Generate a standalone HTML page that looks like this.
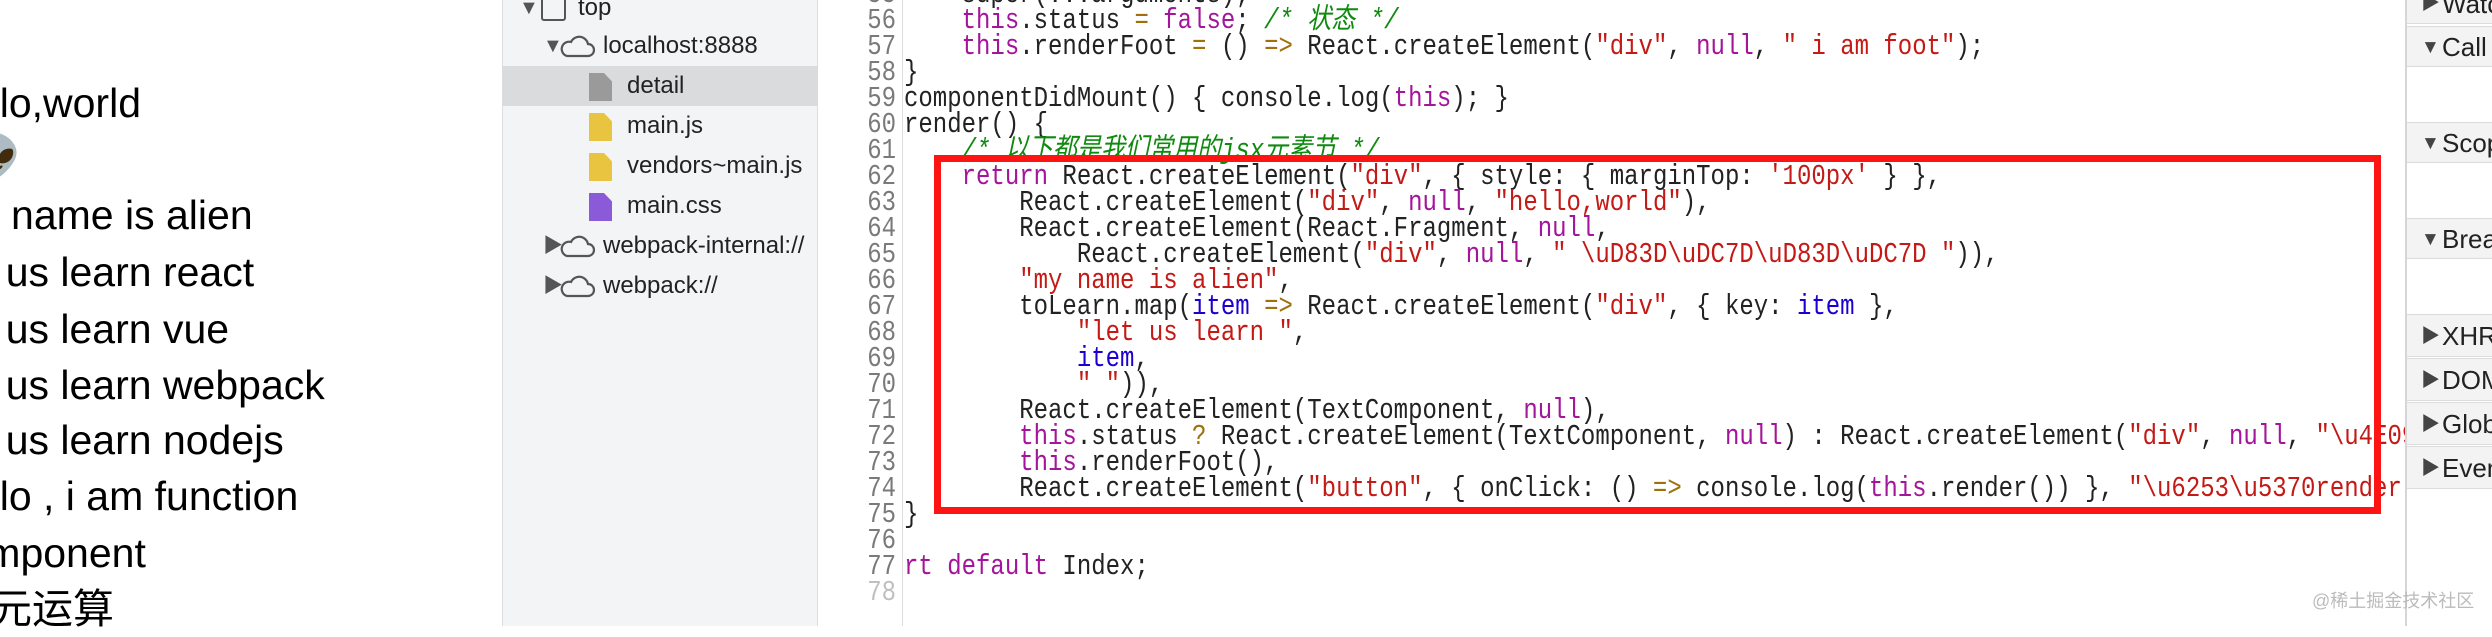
<!DOCTYPE html>
<html><head><meta charset="utf-8">
<style>
*{margin:0;padding:0;box-sizing:border-box}
body{width:2492px;height:626px;overflow:hidden;background:#fff;position:relative;font-family:"Liberation Sans","Noto Sans CJK SC",sans-serif}
.lt{position:absolute;left:-55px;font-size:41px;color:#000;white-space:pre;line-height:56px}
#side{position:absolute;left:502px;top:0;width:316px;height:626px;background:#f3f4f6;border-left:1px solid #ddd;border-right:1px solid #ddd}
.row{position:absolute;left:0;width:315px;height:40px;font-size:24px;line-height:40px;color:#222;white-space:nowrap}
.tri{position:absolute;font-size:20px;color:#555}
.cloud{position:absolute;top:8px}
.file{position:absolute;top:7px;width:23px;height:28px;clip-path:polygon(0 0,65% 0,100% 30%,100% 100%,0 100%)}
#code{position:absolute;left:818px;top:0;width:1587px;height:626px;overflow:hidden;background:#fff}
.ln{position:absolute;left:0;width:78px;text-align:right;font-family:"Liberation Mono",monospace;font-size:24px;line-height:26px;color:#7a7a7a;transform:scaleY(1.18);transform-origin:50% 50%}
.cl{position:absolute;left:86px;font-family:"Liberation Mono","Noto Sans CJK SC",monospace;font-size:24px;line-height:26px;color:#222;white-space:pre;transform:scaleY(1.18);transform-origin:0 50%}
.k{color:#a3159b}.s{color:#c41a16}.c{color:#0f8a0f;font-style:italic}.b{color:#1c00cf}.o{color:#a0700a}
#gut{position:absolute;left:84px;top:0;width:1px;height:626px;background:#ddd}
#box{position:absolute;left:934px;top:155px;width:1447px;height:359px;border:7px solid #ff1414}
#right{position:absolute;left:2405px;top:0;width:87px;height:626px;background:#fff;border-left:2px solid #d6d6d6}
.hd{position:absolute;left:0;width:87px;background:#f3f3f3;border-top:1px solid #dcdcdc;border-bottom:1px solid #dcdcdc;font-size:26px;color:#222;white-space:nowrap;overflow:hidden}
.hd span{position:absolute;left:35px}
.hd i{position:absolute;left:14px;font-style:normal;font-size:19px;color:#444}
#wm{position:absolute;left:2312px;top:587px;font-size:18px;color:#bbb;white-space:nowrap;font-family:"Liberation Sans","Noto Sans CJK SC",sans-serif}
</style></head><body>

<div class="lt" style="top:75px">hello,world</div>
<div class="lt" style="top:128px;left:-30px">👽</div>
<div class="lt" style="top:187px">my name is alien</div>
<div class="lt" style="top:244px;left:-49px">let us learn react</div>
<div class="lt" style="top:301px;left:-49px">let us learn vue</div>
<div class="lt" style="top:357px;left:-49px">let us learn webpack</div>
<div class="lt" style="top:412px;left:-49px">let us learn nodejs</div>
<div class="lt" style="top:468px">hello , i am function</div>
<div class="lt" style="top:525px;left:-57px">component</div>
<div class="lt" style="top:581px;left:-50px">三元运算</div>

<div id="side">
 <div class="row" style="top:-12px"><span class="tri" style="left:16px">▼</span><span style="position:absolute;left:38px;top:9px;width:25px;height:24px;border:2.5px solid #555;border-radius:3px"></span><span style="position:absolute;left:75px">top</span></div>
 <div class="row" style="top:26px"><span class="tri" style="left:40px">▼</span><svg class="cloud" style="left:56px" width="36" height="24" viewBox="0 0 36 24"><path d="M8 22 H29 A6 6 0 0 0 29 10 A9 9 0 0 0 12 8 A7 7 0 0 0 8 22 Z" fill="none" stroke="#555" stroke-width="2.2"/></svg><span style="position:absolute;left:100px">localhost:8888</span></div>
 <div class="row" style="top:66px;background:#dadbdd"><span class="file" style="left:86px;background:#9a9a9a"></span><span style="position:absolute;left:124px">detail</span></div>
 <div class="row" style="top:106px"><span class="file" style="left:86px;background:#e9c440"></span><span style="position:absolute;left:124px">main.js</span></div>
 <div class="row" style="top:146px"><span class="file" style="left:86px;background:#e9c440"></span><span style="position:absolute;left:124px">vendors~main.js</span></div>
 <div class="row" style="top:186px"><span class="file" style="left:86px;background:#8a5ad8"></span><span style="position:absolute;left:124px">main.css</span></div>
 <div class="row" style="top:226px"><span class="tri" style="left:40px">▶</span><svg class="cloud" style="left:56px" width="36" height="24" viewBox="0 0 36 24"><path d="M8 22 H29 A6 6 0 0 0 29 10 A9 9 0 0 0 12 8 A7 7 0 0 0 8 22 Z" fill="none" stroke="#555" stroke-width="2.2"/></svg><span style="position:absolute;left:100px">webpack-internal://</span></div>
 <div class="row" style="top:266px"><span class="tri" style="left:40px">▶</span><svg class="cloud" style="left:56px" width="36" height="24" viewBox="0 0 36 24"><path d="M8 22 H29 A6 6 0 0 0 29 10 A9 9 0 0 0 12 8 A7 7 0 0 0 8 22 Z" fill="none" stroke="#555" stroke-width="2.2"/></svg><span style="position:absolute;left:100px">webpack://</span></div>
</div>

<div id="code">
 <div id="gut"></div>
 <div class="ln" style="top:-17px">55</div><div class="cl" style="top:-17px">    super(...arguments);</div>
 <div class="ln" style="top:9px">56</div><div class="cl" style="top:9px">    <span class="k">this</span>.status <span class="o">=</span> <span class="k">false</span>; <span class="c">/* 状态 */</span></div>
 <div class="ln" style="top:35px">57</div><div class="cl" style="top:35px">    <span class="k">this</span>.renderFoot <span class="o">=</span> () <span class="o">=&gt;</span> React.createElement(<span class="s">"div"</span>, <span class="k">null</span>, <span class="s">" i am foot"</span>);</div>
 <div class="ln" style="top:61px">58</div><div class="cl" style="top:61px">}</div>
 <div class="ln" style="top:87px">59</div><div class="cl" style="top:87px">componentDidMount() { console.log(<span class="k">this</span>); }</div>
 <div class="ln" style="top:113px">60</div><div class="cl" style="top:113px">render() {</div>
 <div class="ln" style="top:139px">61</div><div class="cl" style="top:139px">    <span class="c">/* 以下都是我们常用的jsx元素节 */</span></div>
 <div class="ln" style="top:165px">62</div><div class="cl" style="top:165px">    <span class="k">return</span> React.createElement(<span class="s">"div"</span>, { style: { marginTop: <span class="s">'100px'</span> } },</div>
 <div class="ln" style="top:191px">63</div><div class="cl" style="top:191px">        React.createElement(<span class="s">"div"</span>, <span class="k">null</span>, <span class="s">"hello,world"</span>),</div>
 <div class="ln" style="top:217px">64</div><div class="cl" style="top:217px">        React.createElement(React.Fragment, <span class="k">null</span>,</div>
 <div class="ln" style="top:243px">65</div><div class="cl" style="top:243px">            React.createElement(<span class="s">"div"</span>, <span class="k">null</span>, <span class="s">" \uD83D\uDC7D\uD83D\uDC7D "</span>)),</div>
 <div class="ln" style="top:269px">66</div><div class="cl" style="top:269px">        <span class="s">"my name is alien"</span>,</div>
 <div class="ln" style="top:295px">67</div><div class="cl" style="top:295px">        toLearn.map(<span class="b">item</span> <span class="o">=&gt;</span> React.createElement(<span class="s">"div"</span>, { key: <span class="b">item</span> },</div>
 <div class="ln" style="top:321px">68</div><div class="cl" style="top:321px">            <span class="s">"let us learn "</span>,</div>
 <div class="ln" style="top:347px">69</div><div class="cl" style="top:347px">            <span class="b">item</span>,</div>
 <div class="ln" style="top:373px">70</div><div class="cl" style="top:373px">            <span class="s">" "</span>)),</div>
 <div class="ln" style="top:399px">71</div><div class="cl" style="top:399px">        React.createElement(TextComponent, <span class="k">null</span>),</div>
 <div class="ln" style="top:425px">72</div><div class="cl" style="top:425px">        <span class="k">this</span>.status <span class="o">?</span> React.createElement(TextComponent, <span class="k">null</span>) : React.createElement(<span class="s">"div"</span>, <span class="k">null</span>, <span class="s">"\u4E09\u5143"</span></div>
 <div class="ln" style="top:451px">73</div><div class="cl" style="top:451px">        <span class="k">this</span>.renderFoot(),</div>
 <div class="ln" style="top:477px">74</div><div class="cl" style="top:477px">        React.createElement(<span class="s">"button"</span>, { onClick: () <span class="o">=&gt;</span> console.log(<span class="k">this</span>.render()) }, <span class="s">"\u6253\u5370render"</span></div>
 <div class="ln" style="top:503px">75</div><div class="cl" style="top:503px">}</div>
 <div class="ln" style="top:529px">76</div>
 <div class="ln" style="top:555px">77</div><div class="cl" style="top:555px"><span class="k">rt default</span> Index;</div>
 <div class="ln" style="top:581px;color:#c0c0c0">78</div>
</div>
<div id="box"></div>

<div id="right">
 <div class="hd" style="top:-18px;height:42px;line-height:42px"><i>▶</i><span>Watch</span></div>
 <div class="hd" style="top:26px;height:41px;line-height:41px"><i>▼</i><span>Call Stack</span></div>
 <div class="hd" style="top:122px;height:41px;line-height:41px"><i>▼</i><span>Scope</span></div>
 <div class="hd" style="top:218px;height:41px;line-height:41px"><i>▼</i><span>Breakpoints</span></div>
 <div class="hd" style="top:314px;height:43px;line-height:43px"><i>▶</i><span>XHR/fetch</span></div>
 <div class="hd" style="top:358px;height:43px;line-height:43px"><i>▶</i><span>DOM</span></div>
 <div class="hd" style="top:402px;height:43px;line-height:43px"><i>▶</i><span>Global</span></div>
 <div class="hd" style="top:446px;height:43px;line-height:43px"><i>▶</i><span>Event</span></div>
</div>
<div id="wm">@稀土掘金技术社区</div>
</body></html>
